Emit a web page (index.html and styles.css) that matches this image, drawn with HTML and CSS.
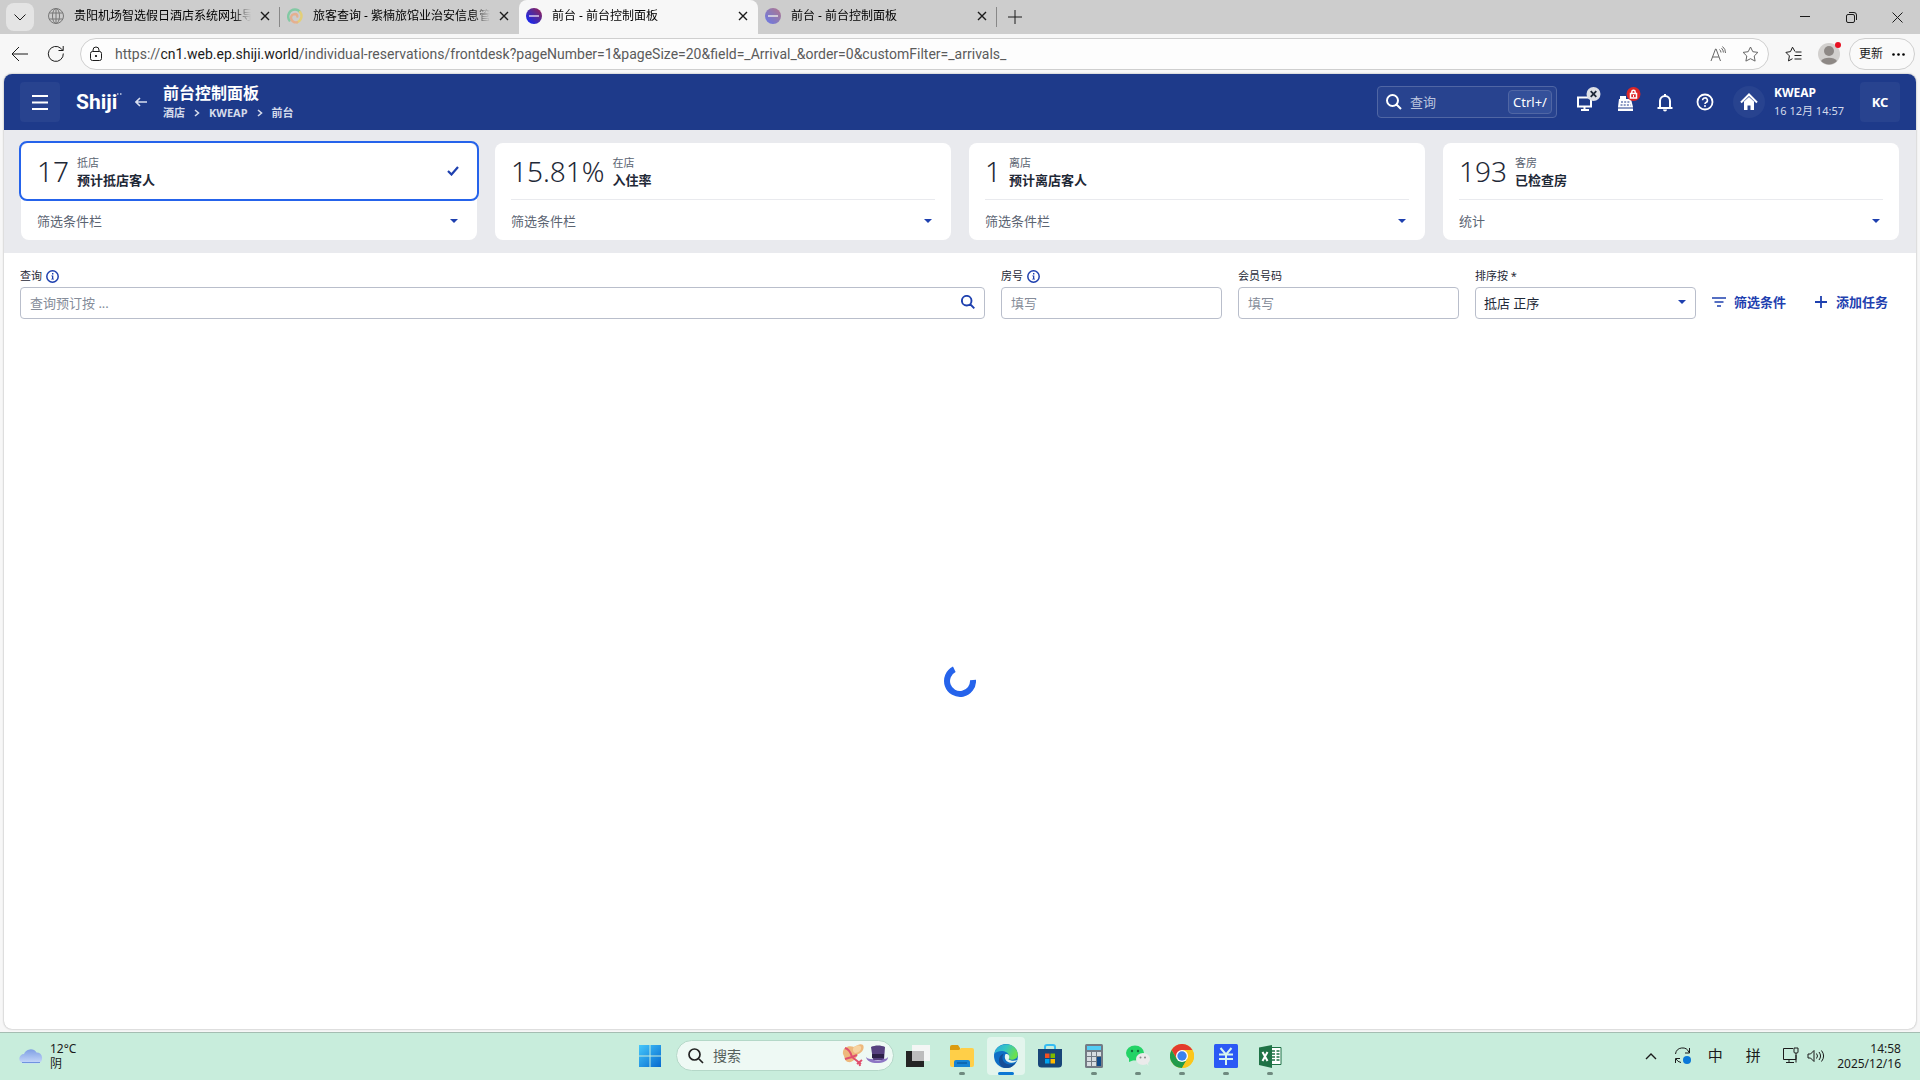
FILE: index.html
```html
<!DOCTYPE html>
<html lang="zh-CN">
<head>
<meta charset="utf-8">
<title>前台 - 前台控制面板</title>
<link rel="stylesheet" href="styles.css">
</head>
<body>
<header class="tabbar">
  <button class="tab-menu" aria-label="标签页操作"><svg width="14" height="14" viewBox="0 0 14 14"><path d="M1.500 4.500 7 10l5.500-5.500" class="line"/></svg></button>
  <div class="tab">
    <svg class="fav" width="16" height="16" viewBox="0 0 16 16" fill="none" stroke="#777" stroke-width="1"><circle cx="8" cy="8" r="7.500"/><ellipse cx="8" cy="8" rx="3.500" ry="7.500"/><path d="M8 .5v15M1.200 5h13.600M1.200 11h13.600"/></svg>
    <span class="tab-title">贵阳机场智选假日酒店系统网址导航</span>
    <button class="tab-x" aria-label="关闭"><svg width="10" height="10" viewBox="0 0 10 10"><path d="m1 1 8 8M9 1 1 9" class="line bold"/></svg></button>
  </div>
  <div class="tab">
    <svg class="fav" width="16" height="16" viewBox="0 0 16 16" fill="none" stroke-width="2.400" stroke-linecap="round"><path d="M2.500 12.500A7 7 0 0 1 8 1.500a6 6 0 0 1 5 2.500" stroke="#83c9a4"/><path d="M13 4a6.500 6.500 0 0 1-3 10.300" stroke="#e3cf78"/><path d="M10 14.300A5 5 0 0 1 4 10a4 4 0 0 1 4-4 2.500 2.500 0 0 1 2.300 2.500" stroke="#e5b08f"/></svg>
    <span class="tab-title">旅客查询 - 紫楠旅馆业治安信息管理系统</span>
    <button class="tab-x" aria-label="关闭"><svg width="10" height="10" viewBox="0 0 10 10"><path d="m1 1 8 8M9 1 1 9" class="line bold"/></svg></button>
  </div>
  <div class="tab tab-active">
    <svg class="fav" width="16" height="16" viewBox="0 0 16 16"><defs><linearGradient id="orb" x1="0" y1="1" x2="1" y2="0"><stop offset=".1" stop-color="#1226f5"/><stop offset=".6" stop-color="#5a2a93"/><stop offset="1" stop-color="#a01a4c"/></linearGradient></defs><circle cx="8" cy="8" r="8" fill="url(#orb)"/><path d="M3 8h10" stroke="#d8c8ee" stroke-width="1.500"/></svg>
    <span class="tab-title">前台 - 前台控制面板</span>
    <button class="tab-x" aria-label="关闭"><svg width="10" height="10" viewBox="0 0 10 10"><path d="m1 1 8 8M9 1 1 9" class="line bold"/></svg></button>
  </div>
  <div class="tab">
    <svg class="fav fav-dim" width="16" height="16" viewBox="0 0 16 16"><circle cx="8" cy="8" r="8" fill="url(#orb)"/><path d="M3 8h10" stroke="#fff" stroke-width="1.500"/></svg>
    <span class="tab-title">前台 - 前台控制面板</span>
    <button class="tab-x" aria-label="关闭"><svg width="10" height="10" viewBox="0 0 10 10"><path d="m1 1 8 8M9 1 1 9" class="line bold"/></svg></button>
  </div>
  <button class="tab-new" aria-label="新建标签页"><svg width="14" height="14" viewBox="0 0 14 14"><path d="M7 0v14M0 7h14" class="line"/></svg></button>
  <div class="win">
    <button aria-label="最小化"><svg width="10" height="10" viewBox="0 0 10 10"><path d="M0 4.500h10" class="line"/></svg></button>
    <button aria-label="还原"><svg width="11" height="11" viewBox="0 0 11 11"><rect x=".5" y="2.500" width="8" height="8" rx="1.500" class="line"/><path d="M3 .5h5A2.500 2.500 0 0 1 10.500 3v5" class="line"/></svg></button>
    <button aria-label="关闭窗口"><svg width="11" height="11" viewBox="0 0 11 11"><path d="m.5.5 10 10M10.500.5l-10 10" class="line"/></svg></button>
  </div>
</header>

<div class="toolbar">
  <button class="nav" aria-label="返回"><svg width="18" height="16" viewBox="0 0 18 16"><path d="M17 8H1.500M8 1 1 8l7 7" class="line"/></svg></button>
  <button class="nav" aria-label="刷新"><svg width="18" height="18" viewBox="0 0 18 18"><path d="M16.300 8.500a7.500 7.500 0 1 1-2.500-5.200l2 2M16.200 1v4.500h-4.700" class="line"/></svg></button>
  <div class="address">
    <svg width="14" height="16" viewBox="0 0 14 16"><rect x="1.500" y="5.500" width="11" height="9" rx="2" class="line"/><path d="M4 5.500V4a3 3 0 0 1 6 0v1.500" class="line"/><circle cx="7" cy="10" r="1.100"/></svg>
    <span class="url">https://<b>cn1.web.ep.shiji.world</b>/individual-reservations/frontdesk?pageNumber=1&amp;pageSize=20&amp;field=_Arrival_&amp;order=0&amp;customFilter=_arrivals_</span>
    <button class="addr-btn" aria-label="大声朗读"><svg width="16" height="16" viewBox="0 0 16 16" fill="none" stroke="#666"><path d="m1 15 4.500-12h.6l4.400 12M2.600 11h6.300M9.500 3.500a4 4 0 0 1 1.500 3M11.500 2.200A6 6 0 0 1 13.400 6.500M12.500.5a8 8 0 0 1 3 6.500"/></svg></button>
    <button class="addr-btn" aria-label="收藏此页"><svg width="17" height="16" viewBox="0 0 17 16" fill="none" stroke="#666" stroke-linejoin="round"><path d="m8.500 1 2.300 4.700 5.100.7-3.700 3.600.9 5.100-4.600-2.400-4.600 2.400.9-5.100L1.100 6.400l5.100-.7z"/></svg></button>
  </div>
  <button class="nav" aria-label="收藏夹"><svg width="17" height="16" viewBox="0 0 17 16"><path d="m10 5.500-2.500-4.300-2 4.400-4.600.8 3.500 3.500-.9 5 4-2.200M10.500 6h6M9.500 9.500h7M9.500 13h7" class="line"/></svg></button>
  <button class="avatar" aria-label="用户"><svg width="24" height="24" viewBox="0 0 24 24"><circle cx="12" cy="13" r="11" fill="#d2d0ce"/><circle cx="12" cy="10" r="5" fill="#8d8885"/><path d="M4 20a9 6 0 0 1 16 0 11 11 0 0 1-16 0" fill="#8d8885"/><circle cx="21" cy="4" r="3" fill="#e81123"/></svg></button>
  <button class="update">更新<svg width="13" height="3" viewBox="0 0 13 3"><circle cx="1.500" cy="1.500" r="1.300"/><circle cx="6.500" cy="1.500" r="1.300"/><circle cx="11.500" cy="1.500" r="1.300"/></svg></button>
</div>

<div class="page">
  <header class="apphead">
    <button class="square" aria-label="菜单"><svg width="16" height="15" viewBox="0 0 16 15"><path d="M0 1h16M0 7.500h16M0 14h16" stroke="#fff" stroke-width="2"/></svg></button>
    <a class="logo" href="#">Shiji<svg width="5" height="14" viewBox="0 0 5 14"><path d="M0 1h1.500M3 1h1.500" stroke="#c3cce4" stroke-width="1.500"/></svg></a>
    <a class="back" href="#" aria-label="返回"><svg width="12" height="10" viewBox="0 0 12 10"><path d="M12 5H1.500M5 1 1 5l4 4" fill="none" stroke="#d8def0" stroke-width="1.600"/></svg></a>
    <div class="heading">
      <h1>前台控制面板</h1>
      <nav class="crumbs"><a href="#">酒店</a><svg width="6" height="8" viewBox="0 0 6 8"><path d="m1 1 3.500 3L1 7"/></svg><a href="#">KWEAP</a><svg width="6" height="8" viewBox="0 0 6 8"><path d="m1 1 3.500 3L1 7"/></svg><a href="#">前台</a></nav>
    </div>
    <label class="quick">
      <svg width="16" height="16" viewBox="0 0 16 16"><path d="m10.500 10.500 4.500 4.500M12 6.500a5.500 5.500 0 1 1-11 0 5.500 5.500 0 0 1 11 0z" fill="none" stroke="#fff" stroke-width="2"/></svg>
      <input type="text" placeholder="查询" aria-label="查询">
      <kbd>Ctrl+/</kbd>
    </label>
    <div class="tools">
      <button aria-label="设备"><svg width="36" height="36" viewBox="0 0 36 36"><path d="M11 13.500h13v9H11zM17.500 22.500v3M14 26h8" fill="none" stroke="#fff" stroke-width="2"/><circle cx="26.500" cy="10" r="7" fill="#dde0e6"/><path d="m23.700 7.200 5.600 5.600M29.300 7.200l-5.600 5.600" stroke="#1f2937" stroke-width="1.800"/></svg></button>
      <button aria-label="收银"><svg width="36" height="36" viewBox="0 0 36 36"><path d="M13 12h6v3h5l2 8v4H11v-4l1-8h1z" fill="#fff"/><path d="M14 18h9M13.500 21h10" stroke="#1e3a8a" stroke-dasharray="2 1.200"/><path d="M11 24h15" stroke="#1e3a8a"/><circle cx="26.500" cy="10" r="7" fill="#dc2626"/><path d="M23.500 9.500h6v4.500h-6zM24.800 9.500V8a1.700 1.700 0 0 1 3.400 0v1.500" fill="none" stroke="#fff" stroke-width="1.500"/><path d="M26.500 11v2" stroke="#fff"/></svg></button>
      <button aria-label="通知"><svg width="36" height="36" viewBox="0 0 36 36"><path d="M10.500 24h15M13 24v-7a5 5 0 0 1 10 0v7" fill="none" stroke="#fff" stroke-width="2"/><path d="M17 10h2v2h-2zM16 25.500h4a2 2 0 0 1-4 0z" fill="#fff"/></svg></button>
      <button aria-label="帮助"><svg width="36" height="36" viewBox="0 0 36 36"><circle cx="18" cy="18" r="7.500" fill="none" stroke="#fff" stroke-width="1.800"/><path d="M15.600 16.300a2.400 2.400 0 1 1 3.400 2.200c-.8.400-1 .8-1 1.500" fill="none" stroke="#fff" stroke-width="1.600"/><circle cx="18" cy="22" r="1" fill="#fff"/></svg></button>
    </div>
    <div class="hotel">
      <button class="home" aria-label="主页"><svg width="18" height="18" viewBox="0 0 18 18"><path d="m1 9.500 8-8 8 8" fill="none" stroke="#fff" stroke-width="2"/><path d="M4 8.500 9 4l5 4.500V17h-3.500v-4.500h-3V17H4z" fill="#fff"/></svg></button>
      <div><strong>KWEAP</strong><time>16 12月 14:57</time></div>
    </div>
    <button class="square user">KC</button>
  </header>

  <section class="cards">
    <article class="card selected">
      <button class="stat"><span class="num">17</span><span class="what"><small>抵店</small><b>预计抵店客人</b></span><svg class="end" width="12" height="10" viewBox="0 0 12 10"><path d="m1 5 3.500 3.500L11 1" fill="none" stroke="#1e40af" stroke-width="2.200"/></svg></button>
      <button class="more">筛选条件栏<svg width="8" height="4" viewBox="0 0 8 4"><path d="M0 0h8L4 4z"/></svg></button>
    </article>
    <article class="card">
      <button class="stat"><span class="num">15.81%</span><span class="what"><small>在店</small><b>入住率</b></span></button>
      <button class="more">筛选条件栏<svg width="8" height="4" viewBox="0 0 8 4"><path d="M0 0h8L4 4z"/></svg></button>
    </article>
    <article class="card">
      <button class="stat"><span class="num">1</span><span class="what"><small>离店</small><b>预计离店客人</b></span></button>
      <button class="more">筛选条件栏<svg width="8" height="4" viewBox="0 0 8 4"><path d="M0 0h8L4 4z"/></svg></button>
    </article>
    <article class="card">
      <button class="stat"><span class="num">193</span><span class="what"><small>客房</small><b>已检查房</b></span></button>
      <button class="more">统计<svg width="8" height="4" viewBox="0 0 8 4"><path d="M0 0h8L4 4z"/></svg></button>
    </article>
  </section>

  <form class="filters">
    <div class="field wide">
      <label for="q">查询<svg width="13" height="13" viewBox="0 0 13 13"><circle cx="6.500" cy="6.500" r="5.700" fill="none" stroke="#1e40af" stroke-width="1.500"/><path d="M6 3h1.400v1.400H6zM5.300 5.400h2v3.300H8v.9H5.200v-.9H6V6.300h-.7z" fill="#1e40af"/></svg></label>
      <div class="control"><input id="q" type="text" placeholder="查询预订按 ..."><svg class="inset" width="14" height="14" viewBox="0 0 14 14"><path d="m9 9 4.300 4.300M10.500 5.700a4.800 4.800 0 1 1-9.600 0 4.800 4.800 0 0 1 9.600 0z" fill="none" stroke="#1e40af" stroke-width="1.900"/></svg></div>
    </div>
    <div class="field">
      <label for="room">房号<svg width="13" height="13" viewBox="0 0 13 13"><circle cx="6.500" cy="6.500" r="5.700" fill="none" stroke="#1e40af" stroke-width="1.500"/><path d="M6 3h1.400v1.400H6zM5.300 5.400h2v3.300H8v.9H5.200v-.9H6V6.300h-.7z" fill="#1e40af"/></svg></label>
      <div class="control"><input id="room" type="text" placeholder="填写"></div>
    </div>
    <div class="field">
      <label for="member">会员号码</label>
      <div class="control"><input id="member" type="text" placeholder="填写"></div>
    </div>
    <div class="field">
      <label for="sort">排序按 *</label>
      <div class="control"><select id="sort"><option>抵店 正序</option></select><svg class="inset arrow" width="8" height="4" viewBox="0 0 8 4"><path d="M0 0h8L4 4z" fill="#1e40af"/></svg></div>
    </div>
    <button type="button" class="act"><svg width="14" height="10" viewBox="0 0 14 10"><path d="M0 1h14M2.500 5h9M5 9h4" stroke="#1e40af" stroke-width="1.600"/></svg>筛选条件</button>
    <button type="button" class="act"><svg width="14" height="14" viewBox="0 0 14 14"><path d="M7 1v12M1 7h12" stroke="#1e40af" stroke-width="1.800"/></svg>添加任务</button>
  </form>

  <main class="results" aria-busy="true"><svg width="32" height="32" viewBox="0 0 32 32"><path d="M29 15A13 13 0 1 1 10.300 4.300" fill="none" stroke="#2563eb" stroke-width="6"/></svg></main>
</div>

<footer class="taskbar">
  <button class="weather"><svg width="24" height="16" viewBox="0 0 24 16"><defs><linearGradient id="cl" x1="0" y1="0" x2="0" y2="1"><stop stop-color="#7f9fe4"/><stop offset="1" stop-color="#c9dafa"/></linearGradient></defs><path d="M5 15.500a4.700 4.700 0 0 1 0-9.400 7 7 0 0 1 12.500-1.600A5.600 5.600 0 0 1 19 15.500z" fill="url(#cl)"/><path d="M3 14.500h18" stroke="#6f93e0"/></svg><span>12°C<br>阴</span></button>
  <div class="apps">
    <button class="app" aria-label="开始"><svg width="24" height="24" viewBox="0 0 24 24"><defs><linearGradient id="wn" x1="0" y1="0" x2="1" y2="1"><stop stop-color="#45c8fb"/><stop offset="1" stop-color="#0669cf"/></linearGradient></defs><path d="M1 1h10.500v10.500H1zM12.500 1H23v10.500H12.500zM1 12.500h10.500V23H1zM12.500 12.500H23V23H12.500z" fill="url(#wn)"/></svg></button>
    <label class="find">
      <svg width="16" height="16" viewBox="0 0 16 16"><path d="m10.500 10.500 4.500 4.500M12 6.500a5.500 5.500 0 1 1-11 0 5.500 5.500 0 0 1 11 0z" fill="none" stroke="#222" stroke-width="1.700"/></svg>
      <input type="text" placeholder="搜索" aria-label="搜索">
      <svg width="46" height="24" viewBox="0 0 46 24"><path d="M1 10C0 3 7 1 12 3c3-2 7-4 9-2 2 3-1 8-5 9-2 5-6 9-10 8C2 17 3 13 1 10z" fill="#eeb87c"/><path d="M12 3c3-2 6-2 7 0 1 3-3 6-6 6-2-1-3-4-1-6z" fill="#f7d3a1"/><path d="M3 4c3 1 6 5 7 9l9 7M10 13l-7 2M10 13l5-2M15 20l5-4M17 17l1 5" fill="none" stroke="#e0506e" stroke-width="2"/><path d="M29 3c4-2 10-2 14 0l-1 13H31z" fill="#57417f"/><path d="M30 10h12v4H30z" fill="#2d2148"/><path d="M24 13c2 2 4 2 6 2 4 2 8 2 12 0 2 0 3-1 4-2 0 4-5 6-11 6s-10-2-11-6z" fill="#8d76c4"/></svg>
    </label>
    <button class="app" aria-label="任务视图"><svg width="24" height="24" viewBox="0 0 24 24"><path d="M0 7h18v16H0z" fill="#242424"/><path d="M6 1h18v16H6z" fill="#f4f6f5"/><path d="M6 7h12v10H6z" fill="#bdbdbd"/></svg></button>
    <button class="app run" aria-label="文件资源管理器"><svg width="24" height="24" viewBox="0 0 24 24"><path d="M0 3q0-2 2-2h6l2 3v4H0z" fill="#dc9c10"/><path d="M0 6h9l2-2h11q2 0 2 2v15q0 2-2 2H2q-2 0-2-2z" fill="#ffcf48"/><path d="M4 23v-5q0-2 2-2h12q2 0 2 2v5z" fill="#1683d4"/><path d="M7 19h10" stroke="#0b5fa8" stroke-width="1.500"/></svg></button>
    <button class="app run current" aria-label="Edge"><svg width="24" height="24" viewBox="0 0 24 24"><defs><linearGradient id="e1" x1="0" y1="0" x2="1" y2=".4"><stop stop-color="#2aa6e0"/><stop offset=".5" stop-color="#35c6c4"/><stop offset="1" stop-color="#6ae04e"/></linearGradient></defs><circle cx="12" cy="12" r="12" fill="#0f6fc6"/><path d="M.3 10C2-2 21-4 23.700 9.500 25 15 18 17 14.500 15c-1-.8.600-1.600.4-3.500C14 7 5 5 .3 10z" fill="url(#e1)"/><path d="M10 9.500c-4 5 0 11 6 11 3 0 5-1.200 6-2.500-3 6-9 7-13 5.500C3 20 4 11 10 9.500z" fill="#134d97"/><path d="M11.500 10c-2 4 .5 8.500 5.500 8.700 3.500.2 5-1 6.500-2.700-3 1-7 1-9-.8.800-1 1-2 .5-3.700-1-1.300-2-1.600-3.500-1.500z" fill="#e6f5ef"/></svg></button>
    <button class="app" aria-label="应用商店"><svg width="24" height="24" viewBox="0 0 24 24"><path d="M7 6V3q0-2 2-2h6q2 0 2 2v3" fill="none" stroke="#37bdf2" stroke-width="2"/><path d="M0 5h24v15q0 3.500-3.500 3.500h-17Q0 23.500 0 20z" fill="#174678"/><path d="M7 9.500h4.500V14H7z" fill="#f25022"/><path d="M12.500 9.500H17V14h-4.500z" fill="#7fba00"/><path d="M7 15h4.500v4.500H7z" fill="#00a4ef"/><path d="M12.500 15H17v4.500h-4.500z" fill="#ffb900"/></svg></button>
    <button class="app run" aria-label="计算器"><svg width="24" height="24" viewBox="0 0 24 24"><rect x="3" width="18" height="24" rx="1.500" fill="#747b84"/><path d="M5 2h14v4H5z" fill="#52cdf5"/><path d="M5 8h4v4H5zM10 8h4v4h-4zM15 8h4v4h-4zM5 13h4v4H5zM10 13h4v4h-4zM5 18h4v4H5zM10 18h4v4h-4z" fill="#d8dde1"/><path d="M15 13h4v9h-4z" fill="#0f4a8a"/></svg></button>
    <button class="app run" aria-label="微信"><svg width="24" height="24" viewBox="0 0 24 24"><ellipse cx="9" cy="9" rx="9" ry="7.500" fill="#23d366"/><path d="m3 13 0 5 5-2z" fill="#23d366"/><circle cx="6" cy="7" r="1.200" fill="#14703c"/><circle cx="12" cy="7" r="1.200" fill="#14703c"/><ellipse cx="17" cy="15" rx="7" ry="6" fill="#ebebeb"/><path d="m20 19 2.500 3-1-5z" fill="#ebebeb"/><circle cx="14.500" cy="13.500" r="1" fill="#888"/><circle cx="19" cy="13.500" r="1" fill="#888"/></svg></button>
    <button class="app run" aria-label="Chrome"><svg width="24" height="24" viewBox="0 0 24 24"><circle cx="12" cy="12" r="12" fill="#fcc61b"/><path d="M1.600 6A12 12 0 0 1 22.400 6H12L7 15z" fill="#e33b2e"/><path d="M1.600 6A12 12 0 0 0 12 24l5.200-9H6.800z" fill="#229b4c"/><path d="M12 6h10.400A12 12 0 0 1 12 24l5.200-9z" fill="#fcc61b"/><circle cx="12" cy="12" r="6" fill="#fff"/><circle cx="12" cy="12" r="4.700" fill="#3b82ee"/></svg></button>
    <button class="app run" aria-label="财务"><svg width="24" height="24" viewBox="0 0 24 24"><rect width="24" height="24" rx="1.500" fill="#2b59f5"/><path d="m6.500 4 5.500 6.500L17.500 4M5 10.500h14M5 15h14M12 10.500V21" fill="none" stroke="#d7f5ee" stroke-width="2"/></svg></button>
    <button class="app run" aria-label="Excel"><svg width="24" height="24" viewBox="0 0 24 24"><path d="M12 3.500h11v17H12z" fill="#fff" stroke="#1f7246"/><path d="M14 7h3M18.500 7h3M14 10h3M18.500 10h3M14 13h3M18.500 13h3M14 16h3M18.500 16h3" stroke="#1f7246" stroke-width="1.500"/><path d="m1 3.500 13-2.500v23L1 21z" fill="#1f7246"/><path d="m4.500 8 5 9M9.500 8l-5 9" stroke="#fff" stroke-width="2"/></svg></button>
  </div>
  <div class="tray">
    <button aria-label="显示隐藏的图标"><svg width="12" height="8" viewBox="0 0 12 8"><path d="m1 7 5-5 5 5" class="line bold"/></svg></button>
    <button aria-label="更新"><svg width="18" height="18" viewBox="0 0 18 18"><path d="M1.500 7A7 7 0 0 1 15 5.500M15.500 1v5H11M7 15.500A7 7 0 0 1 2 12M1.500 16v-4.500H6" class="line"/><circle cx="13" cy="13" r="4" fill="#0a78d8"/></svg></button>
    <button class="ime">中</button>
    <button class="ime ime-mode">拼</button>
    <button class="net" aria-label="网络和音量"><svg width="17" height="17" viewBox="0 0 17 17"><path d="M11 1.500H1.500v11H14V8M7 12.500v3M4 15.500h8M12 1h4v4q0 1-1 1h-2q-1 0-1-1zM14 6v9.500" class="line"/></svg><svg width="18" height="14" viewBox="0 0 18 14"><path d="M1 5h2.500L7 1.500v11L3.500 9H1zM9.500 4.500a4 4 0 0 1 0 5M12 3a6.500 6.500 0 0 1 0 8M14.500 1.500a9 9 0 0 1 0 11" class="line"/></svg></button>
    <button class="clock">14:58<br>2025/12/16</button>
  </div>
</footer>
</body>
</html>
```
FILE: styles.css
```css
* { box-sizing: border-box; }
body {
  margin: 0;
  min-height: 100vh;
  display: flex;
  flex-direction: column;
  background: #f7f7f7;
  color: #1f2937;
  font: 13px/16px "Noto Sans", "Noto Sans CJK SC", sans-serif;
}
button, input, select { font: inherit; color: inherit; margin: 0; padding: 0; border: 0; background: none; }
button { display: flex; align-items: center; justify-content: center; white-space: nowrap; }
a { color: inherit; text-decoration: none; }
svg { flex: none; display: block; }
.line { fill: none; stroke: #1b1b1b; }
.bold { stroke-width: 1.4; }

/* Browser tabs */
.tabbar { display: flex; align-items: center; height: 34px; background: #cdcdcd; color: #000; font-size: 12px; }
.tab-menu { width: 28px; height: 28px; margin: 0 7px 0 6px; border-radius: 8px; background: #e4e4e4; }
.tab { position: relative; flex: 0 1 239px; min-width: 0; height: 34px; display: flex; align-items: center; padding: 0 9px 2px 7px; }
.tab::after { content: ""; position: absolute; right: 0; top: 7px; width: 1px; height: 20px; background: #888; }
.tab:has(+ .tab-active)::after, .tab-active::after { display: none; }
.tab-active { background: #f7f7f7; border-radius: 8px 8px 0 0; }
.tab-title { flex: 1; margin: 0 8px 0 10px; overflow: hidden; white-space: nowrap; -webkit-mask-image: linear-gradient(90deg, #000 90%, transparent); mask-image: linear-gradient(90deg, #000 90%, transparent); }
.tab-x { width: 12px; height: 16px; }
.fav-dim { opacity: .5; }
.tab-new { width: 36px; height: 32px; }
.win { display: flex; margin-left: auto; }
.win button { width: 46px; height: 34px; }

/* Browser toolbar */
.toolbar { display: flex; align-items: center; height: 40px; padding: 0 5px 0 2px; }
.nav { width: 36px; height: 32px; }
.address { flex: 1; min-width: 0; height: 32px; display: flex; align-items: center; margin: 0 6px; padding: 0 2px 0 8px; border: 1px solid #cfcfcf; border-radius: 16px; background: #fdfdfd; }
.url { flex: 1; min-width: 0; overflow: hidden; white-space: nowrap; padding-left: 12px; font: 14px/20px Roboto, sans-serif; color: #5b5b5b; }
.url b { font-weight: 400; color: #1b1b1b; }
.addr-btn { width: 32px; height: 28px; }
.avatar { width: 36px; height: 32px; margin-bottom: 2px; }
.update { width: 66px; height: 32px; margin-left: 2px; gap: 9px; border: 1px solid #cfcfcf; border-radius: 16px; font-size: 12px; color: #1b1b1b; background: #fafafa; }

/* Application */
.page { flex: 1; display: flex; flex-direction: column; margin: 0 4px 3px; border-radius: 8px; overflow: hidden; background: #fff; box-shadow: 0 0 2px #999; }
.apphead { display: flex; align-items: center; height: 56px; padding: 0 16px; background: #1e3a8a; color: #fff; }
.square { width: 40px; height: 40px; border-radius: 4px; background: #28438f; font-weight: 700; }
.logo { display: flex; margin-left: 16px; width: 43px; font: 700 21px/26px Roboto, sans-serif; }
.logo svg { margin-top: 4px; }
.back { margin: 0 16px; }
.heading h1 { margin: 0 0 2px; font-size: 16px; line-height: 20px; font-weight: 700; }
.crumbs { display: flex; align-items: center; gap: 9px; font-size: 11px; line-height: 16px; font-weight: 700; color: #d4daeb; }
.crumbs path { fill: none; stroke: #d4daeb; stroke-width: 1.6; }
.quick { display: flex; align-items: center; width: 180px; height: 32px; margin-left: auto; padding: 0 4px 0 8px; gap: 8px; border: 1px solid #5066a4; border-radius: 4px; background: #28438f; }
.quick input { flex: 1; min-width: 0; }
.quick input::placeholder { color: #bcc5de; opacity: 1; }
kbd { width: 44px; height: 24px; border: 1px solid #5066a4; border-radius: 4px; background: #34509a; font: inherit; line-height: 22px; text-align: center; }
.tools { display: flex; gap: 4px; margin-left: 10px; }
.hotel { display: flex; align-items: center; gap: 9px; margin: 0 16px 0 10px; }
.hotel strong, .hotel time { display: block; line-height: 18px; }
.hotel strong { font-size: 12px; }
.hotel time { font-size: 11px; color: #d4daeb; white-space: nowrap; }
.home { width: 32px; height: 32px; border-radius: 50%; background: #28438f; }

.cards { display: grid; grid-template-columns: repeat(4, 1fr); gap: 18px; padding: 13px 17px; background: #e9eaee; }
.card { height: 97px; display: flex; flex-direction: column; padding: 0 16px; border-radius: 8px; background: #fff; }
.stat { width: 100%; height: 57px; justify-content: flex-start; gap: 8px; border-bottom: 1px solid #e9eaee; text-align: left; }
.num { font-size: 28px; line-height: 40px; font-weight: 300; }
.what { padding-top: 2px; }
.what small, .what b { display: block; }
.what small { font-size: 11px; line-height: 16px; color: #5b6472; }
.what b { font-size: 13px; line-height: 18px; }
.end { margin-left: auto; }
.selected .stat { width: auto; height: 60px; margin: -2px -18px -1px; padding: 0 18px 0 16px; border: 2px solid #2563eb; border-radius: 8px; }
.more { flex: 1; justify-content: space-between; padding: 1px 3px 0 0; color: #5b6472; }
.more path { fill: #1e40af; }

.filters { display: flex; align-items: flex-end; gap: 16px; padding: 15px 16px 12px; }
.field { flex: 0 1 221px; min-width: 0; }
.wide { flex: 1 1 auto; }
.field label { display: flex; align-items: center; gap: 4px; height: 16px; margin-bottom: 3px; font-size: 11px; }
.control { position: relative; }
.control input, .control select { display: block; width: 100%; height: 32px; padding: 0 9px; border: 1px solid #b9becb; border-radius: 4px; background: #fff; }
.control select { appearance: none; padding: 0 8px; }
.control input::placeholder { color: #858c99; opacity: 1; }
.inset { position: absolute; right: 10px; top: 8px; pointer-events: none; }
.arrow { top: 13px; }
.act { height: 32px; gap: 8px; padding: 0 12px 2px 0; color: #1e40af; font-weight: 700; }
.results { flex: 1; display: flex; align-items: center; justify-content: center; padding-top: 2px; }

/* Taskbar */
.taskbar { display: grid; grid-template-columns: 1fr auto 1fr; align-items: center; height: 48px; padding-bottom: 2px; border-top: 1px solid #a5bdb2; background: #c8eddc; color: #1b1b1b; font-size: 12px; line-height: 15px; }
.weather { justify-self: start; gap: 7px; padding-left: 19px; text-align: left; }
.apps { display: flex; align-items: center; }
.app { position: relative; width: 44px; height: 38px; }
.run::after { content: ""; position: absolute; left: 19px; bottom: 0; width: 6px; height: 3px; border-radius: 2px; background: #6f8a7f; }
.current { width: 38px; margin: 0 3px; border-radius: 4px; background: #e3f5ed; }
.current::after { left: 11px; width: 16px; background: #0a78d4; }
.find { display: flex; align-items: center; width: 218px; height: 31px; margin: 0 2px 0 4px; padding: 0 5px 0 11px; gap: 9px; border: 1px solid #b4d8c8; border-radius: 16px; background: #eef9f4; font-size: 14px; }
.find input { flex: 1; min-width: 0; }
.find input::placeholder { color: #55605b; opacity: 1; }
.tray { display: flex; align-items: center; justify-self: end; padding-right: 19px; }
.tray button { width: 32px; height: 40px; }
.tray .ime { font-size: 15px; }
.tray .ime-mode { width: 44px; }
.tray .net { width: 56px; gap: 8px; }
.tray .clock { width: auto; margin-left: 6px; display: block; text-align: right; }
```
